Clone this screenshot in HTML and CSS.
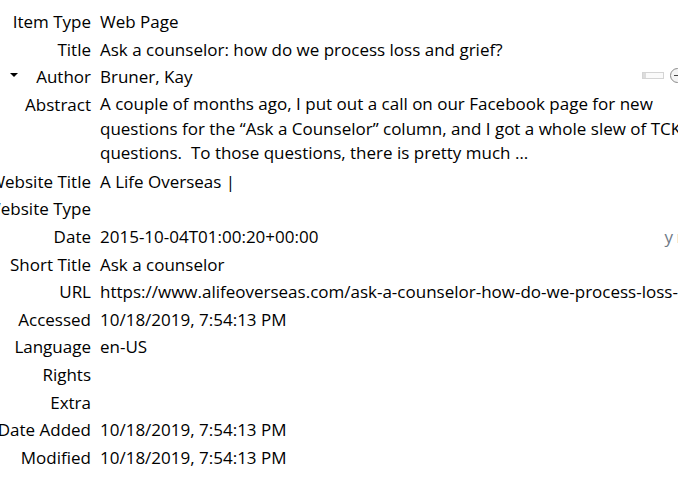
FILE: index.html
```html
<!doctype html>
<html lang="en">
  <head>
    <meta charset="UTF-8" />
    <link rel="stylesheet" href="styles.css">
    <title>Item Info</title>
  </head>
  <body>
    <div class="pane">
      <div class="row">
        <div class="label">Item Type</div>
        <div class="value">Web Page</div>
      </div>
      <div class="row">
        <div class="label">Title</div>
        <div class="value">Ask a counselor: how do we process loss and grief?</div>
      </div>
      <div class="row">
        <div class="label creator">
          <span class="twisty"></span>
          <span>Author</span>
        </div>
        <div class="value with-buttons">
          <span>Bruner, Kay</span>
          <span class="buttons">
            <span class="mode-switch"></span>
            <span class="minus-btn"></span>
          </span>
        </div>
      </div>
      <div class="row abstract">
        <div class="label">Abstract</div>
        <div class="value">A couple of months ago, I put out a call on our Facebook page for new questions for the “Ask a Counselor” column, and I got a whole slew of TCK questions.&nbsp; To those questions, there is pretty much …</div>
      </div>
      <div class="row">
        <div class="label">Website Title</div>
        <div class="value">A Life Overseas |</div>
      </div>
      <div class="row">
        <div class="label">Website Type</div>
        <div class="value"></div>
      </div>
      <div class="row">
        <div class="label">Date</div>
        <div class="value with-buttons">
          <span>2015-10-04T01:00:20+00:00</span>
          <span class="date-order">y m d</span>
        </div>
      </div>
      <div class="row">
        <div class="label">Short Title</div>
        <div class="value">Ask a counselor</div>
      </div>
      <div class="row">
        <div class="label">URL</div>
        <div class="value nowrap">https://www.alifeoverseas.com/ask-a-counselor-how-do-we-process-loss-and-grief/</div>
      </div>
      <div class="row">
        <div class="label">Accessed</div>
        <div class="value">10/18/2019, 7:54:13 PM</div>
      </div>
      <div class="row">
        <div class="label">Language</div>
        <div class="value">en-US</div>
      </div>
      <div class="row">
        <div class="label">Rights</div>
        <div class="value"></div>
      </div>
      <div class="row">
        <div class="label">Extra</div>
        <div class="value"></div>
      </div>
      <div class="row">
        <div class="label">Date Added</div>
        <div class="value">10/18/2019, 7:54:13 PM</div>
      </div>
      <div class="row">
        <div class="label">Modified</div>
        <div class="value">10/18/2019, 7:54:13 PM</div>
      </div>
    </div>
  </body>
</html>
```

FILE: styles.css
```css
html,
body {
  margin: 0;
  background: #fff;
  overflow: hidden;
}

body {
  font-family: "Open Sans", "Noto Sans", sans-serif;
  font-size: 17px;
  color: #000;
}

.pane {
  width: 700px;
  padding-top: 8px;
}

.row {
  display: grid;
  grid-template-columns: 91px 1fr;
  column-gap: 9px;
  min-height: 27.6px;
  line-height: 27.6px;
}

.label {
  display: flex;
  justify-content: flex-end; /* overflows to the left when too long */
  white-space: nowrap;
}

.label.creator {
  justify-content: space-between;
  align-items: center;
  padding-left: 10px;
}

.twisty {
  width: 0;
  height: 0;
  border-left: 4px solid transparent;
  border-right: 4px solid transparent;
  border-top: 4px solid #000;
  margin-top: -3px;
}

.value {
  min-width: 0;
}

.nowrap {
  white-space: nowrap;
}

.abstract .value {
  line-height: 24.5px;
  padding: 1.5px 0 2px;
  width: 592px;
}

.abstract .label {
  line-height: 27.6px;
  align-self: start;
}

.with-buttons {
  display: flex;
  align-items: center;
  justify-content: space-between;
}

.buttons {
  display: flex;
  align-items: center;
  gap: 6px;
  margin-right: 15px;
  margin-top: -2px;
}

.mode-switch {
  width: 20px;
  height: 5px;
  border: 1px solid #d4d4d4;
  background: linear-gradient(to right, #dcdcdc 0 3px, #fafafa 3px);
}

.minus-btn {
  position: relative;
  width: 13px;
  height: 13px;
  border: 1px solid #8a8a8a;
  border-radius: 50%;
  background: #f4f4f4;
}

.minus-btn::after {
  content: "";
  position: absolute;
  left: 3px;
  right: 3px;
  top: 6px;
  height: 1px;
  background: #444;
}

.date-order {
  color: #6f7a86;
  margin-right: -6px;
  word-spacing: -1px;
}
```
